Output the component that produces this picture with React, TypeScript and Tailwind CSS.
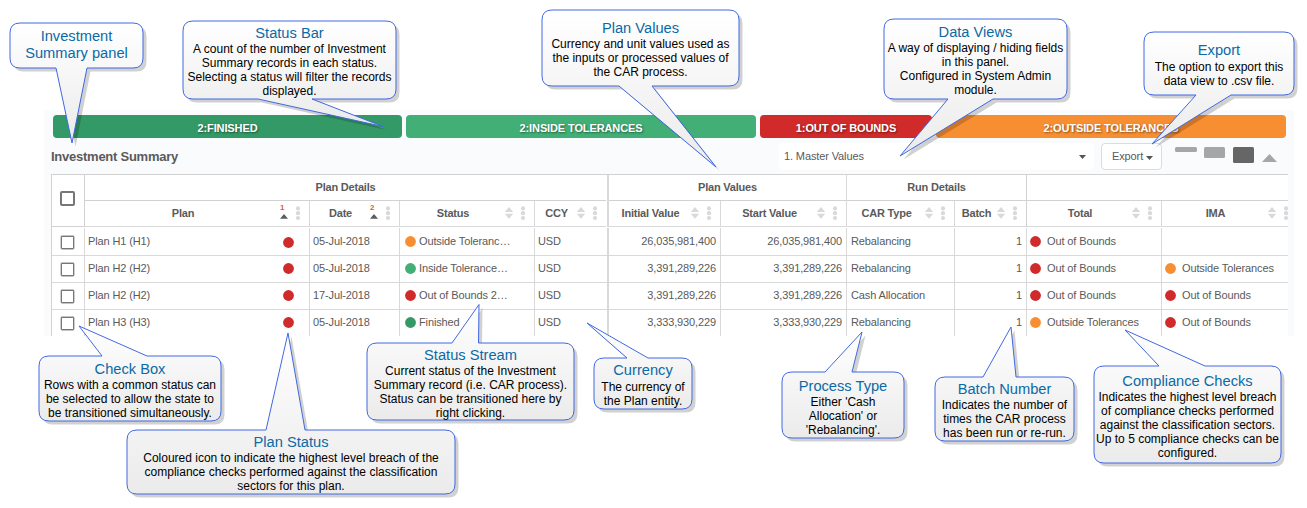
import type { ReactNode } from "react";

const RED = "fill-[#d02a2a]";
const ORANGE = "fill-[#f78f32]";
const GREEN = "fill-[#41af76]";
const DARK_GREEN = "fill-[#339966]";

function Dot({ color, className = "" }: { color: string; className?: string }) {
  return (
    <svg className={`h-[11px] w-[11px] shrink-0 ${className}`} viewBox="0 0 11 11">
      <circle cx="5.5" cy="5.5" r="5.4" className={color} />
    </svg>
  );
}

function HeaderIcons({ order }: { order?: string }) {
  return (
    <div className="relative h-full w-[30px] shrink-0">
      <svg className="h-[25px] w-[30px]" viewBox="0 0 30 25">
        {order ? (
          <path d="M1 17.7 L5 13 L9 17.7Z" fill="#5c5c5c" />
        ) : (
          <path d="M0.8 11 L5 6 L9.2 11Z M0.8 12.8 L9.2 12.8 L5 17.8Z" fill="#d9d9d9" />
        )}
        <circle cx="19" cy="7.4" r="2.1" fill="#d9d9d9" />
        <circle cx="19" cy="12.2" r="2.1" fill="#d9d9d9" />
        <circle cx="19" cy="17" r="2.1" fill="#d9d9d9" />
      </svg>
      {order && (
        <span className="absolute top-[2px] left-[1px] text-[8px] leading-[10px] font-bold text-[#d9622f]">{order}</span>
      )}
    </div>
  );
}

function HeaderCell({ label, width, order }: { label: string; width: string; order?: string }) {
  return (
    <div className={`flex h-[26px] shrink-0 border-[#d9d9d9] border-b ${width}`}>
      <div className="flex-1 pl-[2px] text-center leading-[25px] whitespace-nowrap">{label}</div>
      <HeaderIcons order={order} />
    </div>
  );
}

function Group({ title, width, children }: { title: string; width: string; children: ReactNode }) {
  return (
    <div className={`shrink-0 ${width}`}>
      <div className="h-[26px] border-b border-[#d2d2d2] text-center leading-[25px]">{title}</div>
      <div className="flex">{children}</div>
    </div>
  );
}

const rows = [
  { plan: "Plan H1 (H1)", date: "05-Jul-2018", sc: ORANGE, status: "Outside Toleranc…", value: "26,035,981,400", type: "Rebalancing", tc: RED, total: "Out of Bounds", ic: "", ima: "" },
  { plan: "Plan H2 (H2)", date: "05-Jul-2018", sc: GREEN, status: "Inside Tolerance…", value: "3,391,289,226", type: "Rebalancing", tc: RED, total: "Out of Bounds", ic: ORANGE, ima: "Outside Tolerances" },
  { plan: "Plan H2 (H2)", date: "17-Jul-2018", sc: RED, status: "Out of Bounds 2…", value: "3,391,289,226", type: "Cash Allocation", tc: RED, total: "Out of Bounds", ic: RED, ima: "Out of Bounds" },
  { plan: "Plan H3 (H3)", date: "05-Jul-2018", sc: DARK_GREEN, status: "Finished", value: "3,333,930,229", type: "Rebalancing", tc: ORANGE, total: "Outside Tolerances", ic: RED, ima: "Out of Bounds" },
];

function Row({ row, index }: { row: (typeof rows)[number]; index: number }) {
  const height = index === 0 ? "h-[28px] border-b" : index === 3 ? "h-[26px]" : "h-[27px] border-b";
  const lift = index === 0 ? "" : "pb-[2px]";
  const base = `flex h-full shrink-0 items-center border-[#d9d9d9] ${lift}`;
  const cell = `${base} border-r`;
  return (
    <div className={`flex border-[#d9d9d9] ${height}`}>
      <div className={`${cell} w-[33px] pl-[9px]`}>
        <span className="mt-[2px] h-[13px] w-[13px] rounded-[1px] border-[1.5px] border-[#777] bg-white shadow-[0_0_0_0.4px_#888]" />
      </div>
      <div className={`${cell} w-[225px] justify-between pr-[15px] pl-[3px]`}>
        {row.plan}
        <Dot color={RED} className="mt-px" />
      </div>
      <div className={`${cell} w-[90px] pl-[3px]`}>{row.date}</div>
      <div className={`${cell} w-[135px] gap-[3px] pl-[5px]`}>
        <Dot color={row.sc} />
        {row.status}
      </div>
      <div className={`${base} w-[74px] border-r-2 pl-[3px]`}>USD</div>
      <div className={`${cell} w-[112px] justify-end pr-[4px]`}>{row.value}</div>
      <div className={`${cell} w-[126px] justify-end pr-[4px]`}>{row.value}</div>
      <div className={`${cell} w-[108px] pl-[4px]`}>{row.type}</div>
      <div className={`${cell} w-[72px] justify-end pr-[4px]`}>1</div>
      <div className={`${cell} w-[135px] gap-[6px] pl-[3px]`}>
        <Dot color={row.tc} />
        {row.total}
      </div>
      <div className={`${base} w-[126px] gap-[6px] pl-[3px]`}>
        {row.ic && <Dot color={row.ic} />}
        {row.ima}
      </div>
    </div>
  );
}

type CalloutProps = {
  title: string[];
  lines?: string[];
  box: string;
  body?: string;
  w: number;
  h: number;
  side: "top" | "bottom";
  from: number;
  to: number;
  tip: [number, number];
};

function Callout({ title, lines = [], box, body = "", w, h, side, from, to, tip }: CalloutProps) {
  const r = 10;
  const top = side === "top" ? `H${from} L${tip[0]} ${tip[1]} L${to} 0 H${w - r}` : `H${w - r}`;
  const bottom = side === "bottom" ? `H${to} L${tip[0]} ${tip[1]} L${from} ${h} H${r}` : `H${r}`;
  const d = `M${r} 0 ${top} Q${w} 0 ${w} ${r} V${h - r} Q${w} ${h} ${w - r} ${h} ${bottom} Q0 ${h} 0 ${h - r} V${r} Q0 0 ${r} 0Z`;
  const id = `fill-${title[0].replace(/ /g, "-")}`;
  return (
    <div className={`absolute flex flex-col items-center ${box}`}>
      <svg className="absolute top-0 left-0 h-full w-full overflow-visible">
        <defs>
          <linearGradient id={id} gradientUnits="userSpaceOnUse" x1="0" y1={Math.min(0, tip[1])} x2="0" y2={Math.max(h, tip[1])}>
            <stop offset="0" stopColor="#ffffff" />
            <stop offset="1" stopColor="#ebebeb" />
          </linearGradient>
        </defs>
        <path d={d} fill="#000" fillOpacity="0.18" transform="translate(3.5 3.5)" />
        <path d={d} fill={`url(#${id})`} stroke="#4169e1" strokeWidth="1" strokeLinejoin="bevel" />
      </svg>
      <div className="relative text-center text-[14.67px] leading-[17px] whitespace-nowrap text-[#0b6aa6]">
        {title.map((t) => (
          <div key={t}>{t}</div>
        ))}
      </div>
      <div className={`relative text-center text-[12px] leading-[14px] whitespace-nowrap text-black ${body}`}>
        {lines.map((t) => (
          <div key={t}>{t}</div>
        ))}
      </div>
    </div>
  );
}

const callouts: CalloutProps[] = [
  { title: ["Investment", "Summary panel"], box: "left-[10px] top-[23px] w-[133px] h-[45px] pt-[5px]", w: 133, h: 45, side: "bottom", from: 46, to: 77, tip: [62, 120] },
  { title: ["Status Bar"], lines: ["A count of the number of Investment", "Summary records in each status.", "Selecting a status will filter the records", "displayed."], box: "left-[183px] top-[21px] w-[213px] h-[78px] pt-[4px]", w: 213, h: 78, side: "bottom", from: 75, to: 129, tip: [200, 105.5] },
  { title: ["Plan Values"], lines: ["Currency and unit values used as", "the inputs or processed values of", "the CAR process."], box: "left-[542px] top-[10px] w-[197px] h-[76px] pt-[10px]", w: 197, h: 76, side: "bottom", from: 77, to: 110, tip: [174, 157] },
  { title: ["Data Views"], lines: ["A way of displaying / hiding fields", "in this panel.", "Configured in System Admin", "module."], box: "left-[884px] top-[19px] w-[183px] h-[80px] pt-[5px]", w: 183, h: 80, side: "bottom", from: 64, to: 109, tip: [16, 137] },
  { title: ["Export"], lines: ["The option to export this", "data view to .csv file."], box: "left-[1144px] top-[32px] w-[150px] h-[63px] pt-[10px]", body: "mt-px", w: 150, h: 63, side: "bottom", from: 52, to: 87, tip: [8, 112] },
  { title: ["Check Box"], lines: ["Rows with a common status can", "be selected to allow the state to", "be transitioned simultaneously."], box: "left-[39px] top-[356px] w-[182px] h-[65px] pt-[5px]", w: 182, h: 65, side: "top", from: 63, to: 108, tip: [40, -30] },
  { title: ["Plan Status"], lines: ["Coloured icon to indicate the highest level breach of the", "compliance checks performed against the classification", "sectors for this plan."], box: "left-[127px] top-[430px] w-[328px] h-[64px] pt-[4px]", w: 328, h: 64, side: "top", from: 139, to: 178, tip: [161, -97] },
  { title: ["Status Stream"], lines: ["Current status of the Investment", "Summary record (i.e. CAR process).", "Status can be transitioned here by", "right clicking."], box: "left-[367px] top-[343px] w-[207px] h-[77px] pt-[4px]", w: 207, h: 77, side: "top", from: 85, to: 111.5, tip: [112, -38.5] },
  { title: ["Currency"], lines: ["The currency of", "the Plan entity."], box: "left-[594px] top-[358px] w-[98px] h-[51px] pt-[4px]", body: "mt-px", w: 98, h: 51, side: "top", from: 33, to: 54, tip: [-7, -35] },
  { title: ["Process Type"], lines: ["Either 'Cash", "Allocation' or", "'Rebalancing'."], box: "left-[782px] top-[372px] w-[122px] h-[66px] pt-[6px]", w: 122, h: 66, side: "top", from: 43, to: 70, tip: [80, -40] },
  { title: ["Batch Number"], lines: ["Indicates the number of", "times the CAR process", "has been run or re-run."], box: "left-[935px] top-[377px] w-[139px] h-[64px] pt-[4px]", w: 139, h: 64, side: "top", from: 48, to: 81, tip: [76, -50] },
  { title: ["Compliance Checks"], lines: ["Indicates the highest level breach", "of compliance checks performed", "against the classification sectors.", "Up to 5 compliance checks can be", "configured."], box: "left-[1094px] top-[366px] w-[187px] h-[97px] pt-[7px]", w: 187, h: 97, side: "top", from: 65, to: 111, tip: [31, -36] },
];

export default function App() {
  const status = "flex h-[23px] items-center justify-center rounded-[4px] pt-[3px] [text-shadow:1px_1px_2px_rgba(0,0,0,0.45)]";
  return (
    <div className="relative h-[508px] w-[1307px] overflow-hidden bg-white pt-[110px] font-['Liberation_Sans',Arial,sans-serif]">
      <div className="ml-[44px] h-[226px] w-[1250px] bg-[#fafbfd] pt-[5px] text-[11px] tracking-[-0.12px] text-[#5a5a5a]">
        <div className="flex gap-[4px] pl-[9px] font-bold text-white">
          <div className={`${status} w-[349px] bg-[#339966]`}>2:FINISHED</div>
          <div className={`${status} w-[350px] bg-[#41af76]`}>2:INSIDE TOLERANCES</div>
          <div className={`${status} w-[172px] bg-[#d02a2a]`}>1:OUT OF BOUNDS</div>
          <div className={`${status} w-[350px] bg-[#f78f32]`}>2:OUTSIDE TOLERANCES</div>
        </div>

        <div className="flex h-[36px] items-start pt-[5px] pl-[7px]">
          <h1 className="w-[728px] text-[13px] leading-[27px] font-bold tracking-[-0.25px]">Investment Summary</h1>
          <div className="flex h-[27px] w-[315px] items-center justify-between rounded-[4px] bg-white pr-[8px] pl-[5px]">
            <span>1. Master Values</span>
            <svg className="h-[4px] w-[7px]" viewBox="0 0 7 4">
              <path d="M0 0H7L3.5 4Z" fill="#555" />
            </svg>
          </div>
          <div className="ml-[7px] flex h-[27px] w-[61px] items-center gap-[3px] rounded-[4px] border border-[#dcdcdc] bg-white pl-[10px]">
            <span>Export</span>
            <svg className="mt-[2px] h-[4px] w-[7px]" viewBox="0 0 7 4">
              <path d="M0 0H7L3.5 4Z" fill="#555" />
            </svg>
          </div>
          <div className="mt-[4px] ml-[13px] h-[5px] w-[22px] rounded-[1.5px] bg-[#a6a6a6]" />
          <div className="mt-[4px] ml-[7px] h-[11px] w-[21px] rounded-[1.5px] bg-[#a6a6a6]" />
          <div className="mt-[4px] ml-[8px] h-[16px] w-[21px] rounded-[1.5px] bg-[#666]" />
          <svg className="mt-[11px] ml-[8px] h-[8px] w-[15px]" viewBox="0 0 15 8">
            <path d="M0 8L7.5 0L15 8Z" fill="#a6a6a6" />
          </svg>
        </div>

        <div className="ml-[7px] h-[162px] w-[1237px] overflow-hidden border-t border-l border-[#d2d2d2] bg-white">
          <div className="flex font-bold tracking-[-0.2px]">
            <div className="h-[52px] w-[33px] shrink-0 border-r border-b border-[#d2d2d2] pt-[16px] pl-[8px]">
              <div className="h-[15px] w-[15px] rounded-[2px] border-2 border-[#777] bg-white" />
            </div>
            <Group title="Plan Details" width="w-[522px] pr-px">
              <HeaderCell label="Plan" width="w-[225px] border-r" order="1" />
              <HeaderCell label="Date" width="w-[90px] border-r" order="2" />
              <HeaderCell label="Status" width="w-[135px] border-r" />
              <HeaderCell label="CCY" width="w-[71px]" />
            </Group>
            <Group title="Plan Values" width="w-[240px] border-l-2 border-r border-[#d9d9d9]">
              <HeaderCell label="Initial Value" width="w-[112px] border-r" />
              <HeaderCell label="Start Value" width="w-[125px]" />
            </Group>
            <Group title="Run Details" width="w-[180px] border-r border-[#d2d2d2]">
              <HeaderCell label="CAR Type" width="w-[108px] border-r" />
              <HeaderCell label="Batch" width="w-[71px]" />
            </Group>
            <Group title="" width="w-[270px]">
              <HeaderCell label="Total" width="w-[135px] border-r" />
              <HeaderCell label="IMA" width="w-[135px]" />
            </Group>
          </div>
          <div className="pt-px">
            {rows.map((row, i) => (
              <Row key={i} row={row} index={i} />
            ))}
          </div>
        </div>
      </div>

      {callouts.map((c) => (
        <Callout key={c.title[0]} {...c} />
      ))}
    </div>
  );
}
